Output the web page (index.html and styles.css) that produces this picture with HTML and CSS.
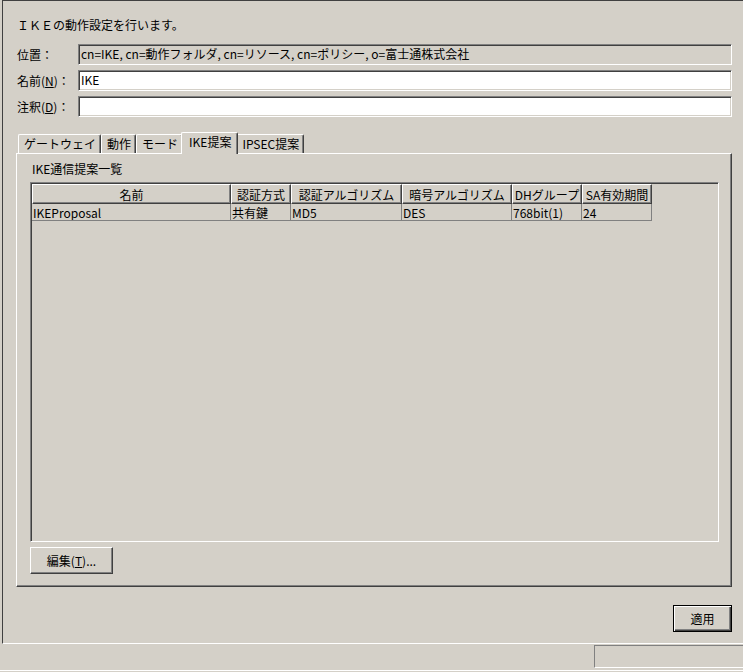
FILE: index.html
```html
<!DOCTYPE html>
<html lang="ja">
<head>
    <meta charset="UTF-8">
    <title>IKE</title>
    <link rel="stylesheet" href="styles.css">
</head>
<body>
    <div class="main">
        <p class="intro">ＩＫＥの動作設定を行います。</p>

        <div class="form">
            <div class="row">
                <label>位置：</label>
                <div class="field readonly">cn=IKE, cn=動作フォルダ, cn=リソース, cn=ポリシー, o=富士通株式会社</div>
            </div>
            <div class="row">
                <label>名前(<u>N</u>)：</label>
                <div class="field">IKE</div>
            </div>
            <div class="row">
                <label>注釈(<u>D</u>)：</label>
                <div class="field"></div>
            </div>
        </div>

        <div class="tabs">
            <div class="tab-strip">
                <div class="tab">ゲートウェイ</div>
                <div class="tab">動作</div>
                <div class="tab">モード</div>
                <div class="tab selected">IKE提案</div>
                <div class="tab">IPSEC提案</div>
            </div>
            <div class="tab-panel">
                <div class="caption">IKE通信提案一覧</div>
                <div class="list">
                    <table>
                        <colgroup>
                            <col style="width:199px">
                            <col style="width:60px">
                            <col style="width:111px">
                            <col style="width:110px">
                            <col style="width:70px">
                            <col style="width:70px">
                        </colgroup>
                        <thead>
                            <tr>
                                <th>名前</th>
                                <th>認証方式</th>
                                <th>認証アルゴリズム</th>
                                <th>暗号アルゴリズム</th>
                                <th>DHグループ</th>
                                <th>SA有効期間</th>
                            </tr>
                        </thead>
                        <tbody>
                            <tr>
                                <td>IKEProposal</td>
                                <td>共有鍵</td>
                                <td>MD5</td>
                                <td>DES</td>
                                <td>768bit(1)</td>
                                <td>24</td>
                            </tr>
                        </tbody>
                    </table>
                </div>
                <button class="btn edit">編集(<u>T</u>)...</button>
            </div>
        </div>

        <div class="actions">
            <button class="btn default">適用</button>
        </div>
    </div>

    <div class="statusbar">
        <div class="pane-left"></div>
        <div class="pane"></div>
    </div>
</body>
</html>
```

FILE: styles.css
```css
body {
    margin: 0;
    width: 743px;
    height: 672px;
    overflow: hidden;
    background: #d4d0c8;
    color: #000;
    font-family: "Noto Sans CJK JP", sans-serif;
    font-size: 12px;
}

.main {
    box-sizing: border-box;
    height: 644px;
    margin-left: 2px;
    padding: 16px 11px 0 14px;
    border-top: 1px solid #404040;
    border-left: 1px solid #404040;
    border-bottom: 1px solid #fff;
    display: flex;
    flex-direction: column;
}

.intro {
    margin: 0;
    height: 16px;
    line-height: 16px;
}

.form {
    margin-top: 11px;
    display: flex;
    flex-direction: column;
    gap: 5px;
}

.row {
    display: flex;
    align-items: center;
    height: 21px;
}

.row label {
    width: 61px;
    flex-shrink: 0;
}

.field {
    flex: 1;
    box-sizing: border-box;
    height: 21px;
    padding: 0 2px;
    line-height: 17px;
    white-space: nowrap;
    overflow: hidden;
    background: #fff;
    border-top: 1px solid #808080;
    border-left: 1px solid #808080;
    border-bottom: 1px solid #fff;
    border-right: 1px solid #fff;
    box-shadow: inset 1px 1px #404040, inset -1px -1px #d4d0c8;
}

.field.readonly {
    background: #d4d0c8;
}

/* tabs */
.tabs {
    margin-top: 15px;
    margin-left: -1px;
}

.tab-strip {
    display: flex;
    align-items: flex-end;
    height: 21px;
    padding-left: 2px;
}

.tab {
    position: relative;
    box-sizing: border-box;
    height: 19px;
    padding: 0 4px 0 5px;
    line-height: 18px;
    white-space: nowrap;
    border-top: 1px solid #fff;
    border-left: 1px solid #fff;
    border-right: 1px solid #404040;
    border-radius: 2px 2px 0 0;
    box-shadow: inset -1px 0 #808080;
}

.tab.selected {
    z-index: 1;
    height: 22px;
    margin: 0 -2px -1px;
    padding: 0 6px 0 7px;
    line-height: 17px;
    background: #d4d0c8;
}

.tab-panel {
    box-sizing: border-box;
    height: 434px;
    padding: 7px 12px 0 13px;
    border-top: 1px solid #fff;
    border-left: 1px solid #fff;
    border-right: 1px solid #404040;
    border-bottom: 1px solid #404040;
    box-shadow: inset -1px -1px #808080;
}

.caption {
    height: 16px;
    line-height: 16px;
    padding-left: 2px;
}

.list {
    box-sizing: border-box;
    height: 360px;
    margin-top: 5px;
    border-top: 1px solid #808080;
    border-left: 1px solid #808080;
    border-bottom: 1px solid #fff;
    border-right: 1px solid #fff;
    box-shadow: inset 1px 1px #404040, inset -1px -1px #d4d0c8;
    padding: 1px;
}

.list table {
    width: 620px;
    table-layout: fixed;
    border-collapse: separate;
    border-spacing: 0;
    font-size: 12px;
}

.list th {
    box-sizing: border-box;
    height: 20px;
    padding: 0;
    font-weight: normal;
    text-align: center;
    white-space: nowrap;
    overflow: hidden;
    border-top: 1px solid #fff;
    border-left: 1px solid #fff;
    border-right: 1px solid #404040;
    border-bottom: 1px solid #404040;
    box-shadow: inset -1px -1px #808080;
}

.list td {
    box-sizing: border-box;
    height: 17px;
    padding: 0 1px;
    line-height: 15px;
    white-space: nowrap;
    overflow: hidden;
    border-right: 1px solid #808080;
    border-bottom: 1px solid #808080;
}

/* buttons */
.btn {
    box-sizing: border-box;
    height: 27px;
    padding: 0;
    font-family: inherit;
    font-size: 12px;
    color: #000;
    background: #d4d0c8;
    border-top: 1px solid #fff;
    border-left: 1px solid #fff;
    border-right: 1px solid #404040;
    border-bottom: 1px solid #404040;
    box-shadow: inset -1px -1px #808080;
}

.btn.edit {
    display: block;
    width: 83px;
    margin-top: 5px;
}

.actions {
    display: flex;
    justify-content: flex-end;
    margin-top: 18px;
}

.btn.default {
    width: 59px;
    border: 1px solid #000;
    box-shadow: inset 1px 1px #fff, inset -1px -1px #404040, inset -2px -2px #808080;
}

/* status bar */
.statusbar {
    display: flex;
    height: 25px;
    padding-top: 1px;
    border-bottom: 1px solid #fff;
}

.pane-left {
    flex: 1;
}

.pane {
    box-sizing: border-box;
    width: 149px;
    height: 23px;
    border-top: 1px solid #808080;
    border-left: 1px solid #808080;
    border-bottom: 1px solid #fff;
}
```
